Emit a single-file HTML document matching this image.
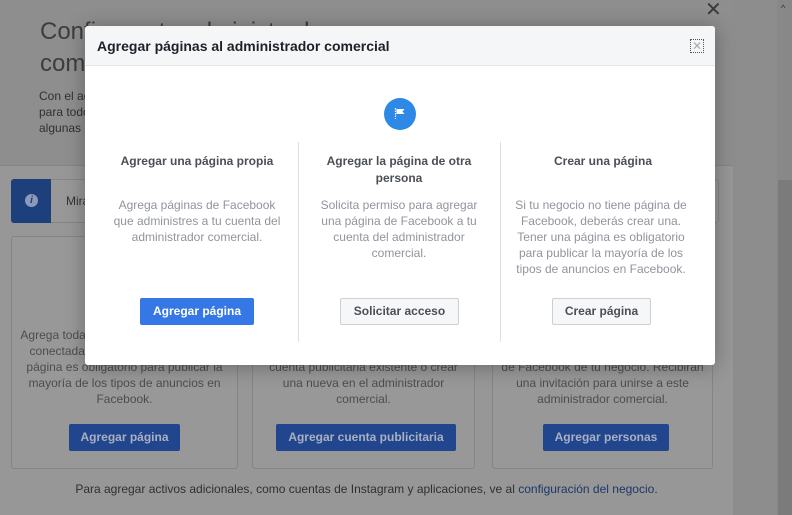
<!DOCTYPE html>
<html><head><meta charset="utf-8"><style>
*{box-sizing:border-box;margin:0;padding:0}
body{width:792px;height:515px;overflow:hidden;font-family:"Liberation Sans",Arial,sans-serif;background:#8d8d8d;position:relative}
.a{position:absolute}
.top{left:0;top:0;width:733px;height:166px;background:#8e8e8e;border-bottom:1px solid #858585}
.low{left:0;top:166px;width:733px;height:349px;background:#979797}
.card{border:1px solid #858585;border-radius:3px;background:#989898}
.t{color:#4b4d50;font-size:12px;text-align:center;line-height:16px;white-space:nowrap}
.bb{background:#21468e;color:#a9b0c0;font-size:12px;font-weight:bold;text-align:center;line-height:26px;border-radius:2px;height:27px}
.modal{left:85px;top:26px;width:630px;height:339px;background:#fff;border-radius:3px;box-shadow:0 2px 20px rgba(0,0,0,.3);overflow:hidden}
.hd{height:40px;background:#f5f6f7;border-bottom:1px solid #e5e5e5;padding:12px 12px;font-size:14px;font-weight:bold;color:#1d2129}
.ct{font-size:12px;font-weight:bold;color:#4b4f56;text-align:center;line-height:17px}
.cd{font-size:12px;color:#90949c;text-align:center;line-height:16px}
.btn{height:27px;line-height:25px;font-size:12px;font-weight:bold;text-align:center;border-radius:2px;border:1px solid #ccd0d5;background:#f6f7f9;color:#4b4f56}
.div{width:1px;background:#dddfe2;top:116px;height:200px}
</style></head><body>
<div class="a top"></div>
<div class="a low"></div>
<div class="a" style="left:777px;top:0;width:15px;height:515px;background:#888"></div>
<div class="a" style="left:778px;top:180px;width:14px;height:335px;background:#7b7b7b"></div>
<div class="a" style="left:781px;top:3px;font-size:9px;color:#333">^</div>
<div class="a" style="left:40px;top:16px;font-size:24px;color:#3c3d3f;line-height:32px">Configurar tu administrador<br>comercial</div>
<div class="a" style="left:39px;top:88px;font-size:12px;color:#2f3033;line-height:16px">Con el administrador<br>para todos<br>algunas</div>
<div class="a" style="left:705px;top:-3px;font-size:20px;color:#3a3a3a">✕</div>
<div class="a card" style="left:11px;top:179px;width:708px;height:44px"></div>
<div class="a" style="left:11px;top:179px;width:40px;height:44px;background:#1d3f7c;border-radius:3px 0 0 3px"></div>
<div class="a" style="left:25px;top:194px;width:13px;height:13px;border-radius:50%;background:#8a9ab8;color:#1d3f7c;font-size:10px;font-weight:bold;text-align:center;line-height:13px;font-style:italic">i</div>
<div class="a" style="left:66px;top:194px;font-size:12px;color:#333">Mira</div>
<div class="a card" style="left:11px;top:236px;width:227px;height:233px"></div>
<div class="a card" style="left:252px;top:236px;width:223px;height:233px"></div>
<div class="a card" style="left:492px;top:236px;width:221px;height:233px"></div>
<div class="a t" style="left:11px;top:327px;width:227px">Agrega todas las páginas de Facebook<br>conectadas a tu negocio. Tener una<br>página es obligatorio para publicar la<br>mayoría de los tipos de anuncios en<br>Facebook.</div>
<div class="a t" style="left:252px;top:359px;width:223px">cuenta publicitaria existente o crear<br>una nueva en el administrador<br>comercial.</div>
<div class="a t" style="left:492px;top:359px;width:221px">de Facebook de tu negocio. Recibirán<br>una invitación para unirse a este<br>administrador comercial.</div>
<div class="a bb" style="left:69px;top:424px;width:111px">Agregar página</div>
<div class="a bb" style="left:276px;top:424px;width:180px">Agregar cuenta publicitaria</div>
<div class="a bb" style="left:543px;top:424px;width:126px">Agregar personas</div>
<div class="a" style="left:0;top:482px;width:733px;text-align:center;font-size:12px;color:#2f3033">Para agregar activos adicionales, como cuentas de Instagram y aplicaciones, ve al <span style="color:#1c3767">configuración del negocio</span>.</div>

<div class="a modal">
<div class="hd">Agregar páginas al administrador comercial</div>
<div class="a" style="right:11px;top:13px;width:14px;height:14px;border:1px dotted #555;color:#aaa;font-size:12px;line-height:12px;text-align:center">✕</div>
<div class="a" style="left:299px;top:72px;width:32px;height:32px;border-radius:50%;background:#2d88e6">
<svg width="32" height="32" viewBox="0 0 32 32"><path d="M11.5 10v11" stroke="#fff" stroke-width="1.2" stroke-dasharray="1.5 1"/><path d="M12.5 11h8l-2 2.5 2 2.5h-8z" fill="#fff"/></svg></div>
<div class="a div" style="left:213px"></div>
<div class="a div" style="left:415px"></div>
<div class="a ct" style="left:12px;top:127px;width:200px">Agregar una página propia</div>
<div class="a ct" style="left:220px;top:127px;width:188px">Agregar la página de otra<br>persona</div>
<div class="a ct" style="left:418px;top:127px;width:200px">Crear una página</div>
<div class="a cd" style="left:12px;top:171px;width:200px">Agrega páginas de Facebook<br>que administres a tu cuenta del<br>administrador comercial.</div>
<div class="a cd" style="left:214px;top:171px;width:200px">Solicita permiso para agregar<br>una página de Facebook a tu<br>cuenta del administrador<br>comercial.</div>
<div class="a cd" style="left:416px;top:171px;width:200px">Si tu negocio no tiene página de<br>Facebook, deberás crear una.<br>Tener una página es obligatorio<br>para publicar la mayoría de los<br>tipos de anuncios en Facebook.</div>
<div class="a btn" style="left:55px;top:272px;width:114px;background:#3578e5;border-color:#3578e5;color:#fff">Agregar página</div>
<div class="a btn" style="left:255px;top:272px;width:119px">Solicitar acceso</div>
<div class="a btn" style="left:467px;top:272px;width:99px">Crear página</div>
</div>
</body></html>
